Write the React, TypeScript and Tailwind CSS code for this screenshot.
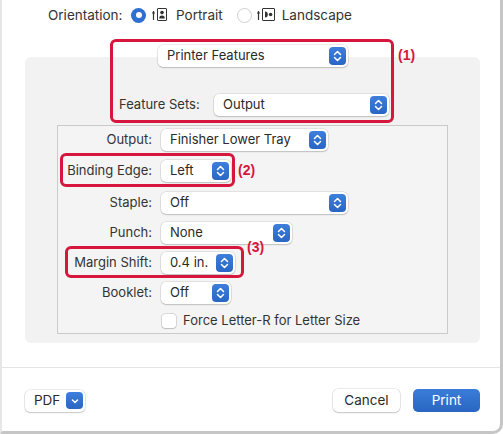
import React from 'react';

const font = { fontFamily: 'Inter, "Liberation Sans", sans-serif' };

const Stepper: React.FC = () => (
  <span className="w-[17px] h-[18px] rounded-[4px] bg-gradient-to-b from-[#3d7fdb] to-[#2a66c4] flex items-center justify-center shrink-0">
    <svg width="17" height="18" viewBox="0 0 17 18" fill="none">
      <path d="M5.5 7.5 L8.5 4.5 L11.5 7.5" stroke="white" strokeWidth="1.5" strokeLinecap="round" strokeLinejoin="round" />
      <path d="M5.5 10.5 L8.5 13.5 L11.5 10.5" stroke="white" strokeWidth="1.5" strokeLinecap="round" strokeLinejoin="round" />
    </svg>
  </span>
);

interface PopupProps {
  value: string;
  className?: string;
}

const Popup: React.FC<PopupProps> = ({ value, className = '' }) => (
  <div
    className={`h-[22px] bg-white rounded-[5px] shadow-[0_0_0_0.5px_rgba(0,0,0,0.14),0_1px_1.5px_rgba(0,0,0,0.16)] flex items-center justify-between pl-[9px] pr-[2px] text-[13px] text-[#2a2a2a] ${className}`}
  >
    <span>{value}</span>
    <Stepper />
  </div>
);

const Row: React.FC<{ label: string; children: React.ReactNode; className?: string }> = ({ label, children, className = '' }) => (
  <div className={`flex items-center h-[22px] ${className}`}>
    <span className="w-[94px] text-right text-[13px] text-[#333]">{label}</span>
    <div className="ml-[9px]">{children}</div>
  </div>
);

const PortraitIcon = () => (
  <svg width="16" height="14" viewBox="0 0 16 14" fill="none">
    <path d="M1.5 12 V3 M0 5 H3" stroke="#333" strokeWidth="1.2" />
    <rect x="5.5" y="0.5" width="9" height="12" rx="0.5" stroke="#333" strokeWidth="1" />
    <circle cx="10" cy="4.6" r="1.8" fill="#333" />
    <path d="M7.2 10.5 Q7.2 7.4 10 7.4 Q12.8 7.4 12.8 10.5 Z" fill="#333" />
  </svg>
);

const LandscapeIcon = () => (
  <svg width="19" height="14" viewBox="0 0 19 14" fill="none">
    <path d="M1.5 12 V3 M0 5 H3" stroke="#333" strokeWidth="1.2" />
    <rect x="5.5" y="0.5" width="12" height="12" rx="0.5" stroke="#333" strokeWidth="1" />
    <path d="M8 3.5 Q10.8 3.5 10.8 6.5 Q10.8 9.5 8 9.5 Z" fill="#333" />
    <circle cx="13.6" cy="6.5" r="1.8" fill="#333" />
  </svg>
);

const Mark: React.FC<{ n: number; className: string }> = ({ n, className }) => (
  <span
    className={`absolute text-[14px] font-bold text-[#d6163d] leading-none ${className}`}
    style={{ fontFamily: '"Liberation Sans", Arial, sans-serif' }}
  >
    ({n})
  </span>
);

export default function App() {
  return (
    <div
      className="relative w-[503px] h-[434px] bg-white border-l-2 border-l-[#e6e6e6] border-r-[3px] border-r-[#c6c6c6] border-b-[3px] border-b-[#c6c6c6] rounded-br-[10px] overflow-hidden flex flex-col"
      style={font}
    >
      {/* orientation */}
      <div className="h-[30px] flex items-center pl-[46px] text-[13.5px] text-[#333]">
        <span className="w-[83px]">Orientation:</span>
        <span className="w-[15px] h-[15px] rounded-full bg-[#2f6fd2] flex items-center justify-center">
          <span className="w-[6px] h-[6px] rounded-full bg-white" />
        </span>
        <span className="ml-[6px]"><PortraitIcon /></span>
        <span className="ml-[8px]">Portrait</span>
        <span className="ml-[14px] w-[15px] h-[15px] rounded-full bg-white border border-[#cfcfcf]" />
        <span className="ml-[5px]"><LandscapeIcon /></span>
        <span className="ml-[6px]">Landscape</span>
      </div>

      <Popup value="Printer Features" className="relative z-10 mt-[15px] ml-[156px] w-[190px]" />

      {/* settings panel */}
      <div className="-mt-[10px] ml-[23px] w-[455px] h-[286px] rounded-[6px] bg-[#f2f2f2] flex flex-col">
        <div className="mt-[37px] pl-[94px] flex items-center">
          <span className="w-[95px] text-[13px] text-[#333]">Feature Sets:</span>
          <Popup value="Output" className="w-[175px]" />
        </div>

        <div className="mt-[9px] ml-[32px] w-[391px] h-[209px] border border-[#cacaca] bg-[#f4f4f4] flex flex-col pt-[3px]">
          <Row label="Output:">
            <Popup value="Finisher Lower Tray" className="w-[167px]" />
          </Row>
          <Row label="Binding Edge:" className="mt-[9px]">
            <Popup value="Left" className="w-[70px]" />
          </Row>
          <Row label="Staple:" className="mt-[10px]">
            <Popup value="Off" className="w-[187px]" />
          </Row>
          <Row label="Punch:" className="mt-[8px]">
            <Popup value="None" className="w-[131px]" />
          </Row>
          <Row label="Margin Shift:" className="mt-[8px]">
            <Popup value="0.4 in." className="w-[74px]" />
          </Row>
          <Row label="Booklet:" className="mt-[8px]">
            <Popup value="Off" className="w-[70px]" />
          </Row>
          <div className="mt-[6px] h-[22px] flex items-center pl-[104px]">
            <span className="w-[14px] h-[14px] rounded-[3px] bg-white shadow-[0_0_0_0.5px_rgba(0,0,0,0.22),0_1px_1px_rgba(0,0,0,0.12)]" />
            <span className="ml-[7px] text-[13px] text-[#333]">Force Letter-R for Letter Size</span>
          </div>
        </div>
      </div>

      <div className="mt-[24px] h-px bg-[#e4e4e4]" />

      {/* footer buttons */}
      <div className="mt-[21px] flex items-center justify-between pl-[23px] pr-[20px] text-[13.5px]">
        <div className="w-[60px] h-[22px] bg-white rounded-[5px] shadow-[0_0_0_0.5px_rgba(0,0,0,0.14),0_1px_1.5px_rgba(0,0,0,0.16)] flex items-center justify-between pl-[9px] pr-[2px] text-[#2a2a2a]">
          <span>PDF</span>
          <span className="w-[17px] h-[17px] rounded-[4px] bg-gradient-to-b from-[#3d7fdb] to-[#2a66c4] flex items-center justify-center">
            <svg width="10" height="10" viewBox="0 0 10 10" fill="none">
              <path d="M2.5 4 L5 6.5 L7.5 4" stroke="white" strokeWidth="1.5" strokeLinecap="round" strokeLinejoin="round" />
            </svg>
          </span>
        </div>
        <div className="flex items-center gap-[13px]">
          <button className="w-[67px] h-[23px] bg-white rounded-[5px] shadow-[0_0_0_0.5px_rgba(0,0,0,0.16),0_1px_1.5px_rgba(0,0,0,0.16)] text-[#2a2a2a]">
            Cancel
          </button>
          <button className="w-[67px] h-[23px] rounded-[5px] bg-gradient-to-b from-[#3a7dd8] to-[#2966c2] text-white">
            Print
          </button>
        </div>
      </div>

      {/* annotations */}
      <div className="absolute left-[108px] top-[39px] w-[284px] h-[84px] border-[3px] border-[#d6163d] rounded-[6px]" />
      <Mark n={1} className="left-[396px] top-[48px]" />
      <div className="absolute left-[58px] top-[153px] w-[175px] h-[34px] border-[3px] border-[#d6163d] rounded-[6px]" />
      <Mark n={2} className="left-[236px] top-[163px]" />
      <div className="absolute left-[63px] top-[246px] w-[179px] h-[32px] border-[3px] border-[#d6163d] rounded-[6px]" />
      <Mark n={3} className="left-[245px] top-[240px]" />
    </div>
  );
}
